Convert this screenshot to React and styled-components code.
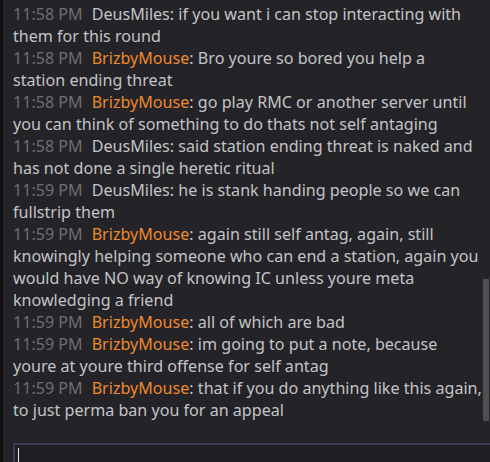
import React from 'react';
import styled, { createGlobalStyle } from 'styled-components';

const GlobalStyle = createGlobalStyle`
  html, body {
    margin: 0;
    padding: 0;
    background: #232328;
  }
`;

const Window = styled.div`
  width: 490px;
  height: 462px;
  display: flex;
  background: #232328;
  border-left: 3px solid #0f0f12;
  box-sizing: border-box;
  overflow: hidden;
  font-family: "Noto Sans", "Open Sans", sans-serif;
`;

const Main = styled.div`
  flex: 1;
  display: flex;
  flex-direction: column;
  min-width: 0;
`;

const LogRow = styled.div`
  flex: 1;
  display: flex;
  min-height: 0;
`;

const Log = styled.div`
  flex: 1;
  min-width: 0;
  padding: 3px 0 0 10px;
  font-size: 16.1px;
  line-height: 22px;
  color: #c4c4c6;
`;

const Line = styled.div`
  white-space: nowrap;
`;

const Stamp = styled.span`
  color: #6e6e72;
  margin-right: 9px;
`;

const Name = styled.span`
  color: ${p => (p.$highlight ? '#ee8a2b' : '#c4c4c6')};
`;

const ScrollTrack = styled.div`
  width: 7px;
  padding-top: 279px;
`;

const Thumb = styled.div`
  width: 6px;
  height: 142px;
  background: #4f4f52;
`;

const InputBox = styled.div`
  height: 14px;
  margin-left: 10px;
  border-top: 2px solid #3b3b56;
  border-left: 2px solid #3b3b56;
  background: #1f1f24;
  padding: 3px 0 0 3px;
`;

const Caret = styled.div`
  width: 1px;
  height: 18px;
  background: #f0f0f0;
`;

const messages = [
  { time: '11:58 PM', name: 'DeusMiles', rows: ['if you want i can stop interacting with', 'them for this round'] },
  { time: '11:58 PM', name: 'BrizbyMouse', hl: true, rows: ['Bro youre so bored you help a', 'station ending threat'] },
  { time: '11:58 PM', name: 'BrizbyMouse', hl: true, rows: ['go play RMC or another server until', 'you can think of something to do thats not self antaging'] },
  { time: '11:58 PM', name: 'DeusMiles', rows: ['said station ending threat is naked and', 'has not done a single heretic ritual'] },
  { time: '11:59 PM', name: 'DeusMiles', rows: ['he is stank handing people so we can', 'fullstrip them'] },
  { time: '11:59 PM', name: 'BrizbyMouse', hl: true, rows: ['again still self antag, again, still', 'knowingly helping someone who can end a station, again you', 'would have NO way of knowing IC unless youre meta', 'knowledging a friend'] },
  { time: '11:59 PM', name: 'BrizbyMouse', hl: true, rows: ['all of which are bad'] },
  { time: '11:59 PM', name: 'BrizbyMouse', hl: true, rows: ['im going to put a note, because', 'youre at youre third offense for self antag'] },
  { time: '11:59 PM', name: 'BrizbyMouse', hl: true, rows: ['that if you do anything like this again,', 'to just perma ban you for an appeal'] },
];

export default function App() {
  return (
    <>
      <GlobalStyle />
      <Window>
        <Main>
          <LogRow>
            <Log>
              {messages.map((m, i) => (
                <React.Fragment key={i}>
                  <Line>
                    <Stamp>{m.time}</Stamp>
                    <Name $highlight={m.hl}>{m.name}</Name>: {m.rows[0]}
                  </Line>
                  {m.rows.slice(1).map((r, j) => (
                    <Line key={j}>{r}</Line>
                  ))}
                </React.Fragment>
              ))}
            </Log>
            <ScrollTrack>
              <Thumb />
            </ScrollTrack>
          </LogRow>
          <InputBox>
            <Caret />
          </InputBox>
        </Main>
      </Window>
    </>
  );
}
